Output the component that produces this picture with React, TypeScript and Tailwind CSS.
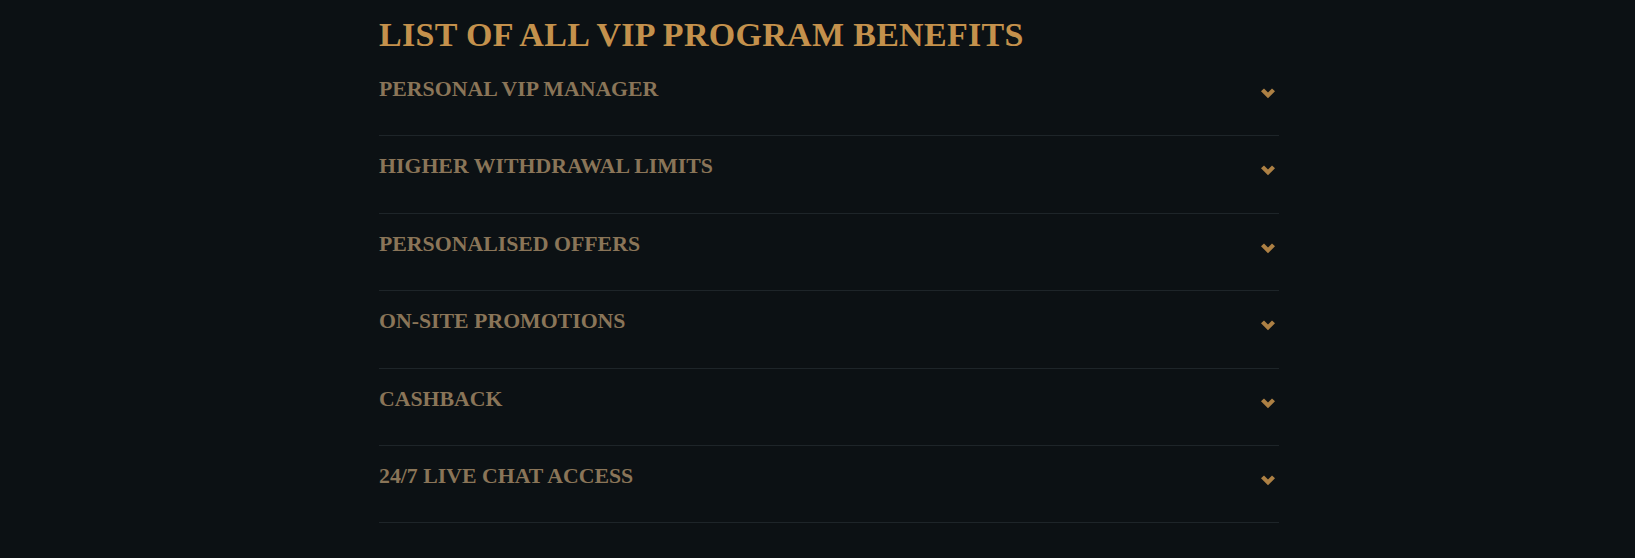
import React from 'react';

const benefits = [
  'PERSONAL VIP MANAGER',
  'HIGHER WITHDRAWAL LIMITS',
  'PERSONALISED OFFERS',
  'ON-SITE PROMOTIONS',
  'CASHBACK',
  '24/7 LIVE CHAT ACCESS',
];

const Chevron = () => (
  <svg width="14" height="11" viewBox="0 0 14 11" className="text-[#ad8044]">
    <path d="M0 3.2 L3 0.4 L7 4.4 L11 0.4 L14 3.2 L7 10.2 Z" fill="currentColor" />
  </svg>
);

export default function App() {
  return (
    <div className="min-h-[558px] bg-[#0c1114] font-['Liberation_Serif',serif]">
      <div className="pl-[379px]">
        <div className="w-[900px] pt-[17px]">
          <h2 className="text-[34px] leading-[36px] font-bold tracking-[0.3px] text-[#c4914c] mb-[6px] whitespace-nowrap">
            LIST OF ALL VIP PROGRAM BENEFITS
          </h2>
          <div>
            {benefits.map((b) => (
              <div
                key={b}
                className="flex items-start justify-between pt-[18px] pb-[34.4px] border-b border-[#1e2529]"
              >
                <span className="text-[21.8px] leading-[24px] font-bold text-[#8a7558] whitespace-nowrap">{b}</span>
                <span className="mr-[4px] mt-[11px]">
                  <Chevron />
                </span>
              </div>
            ))}
          </div>
        </div>
      </div>
    </div>
  );
}
